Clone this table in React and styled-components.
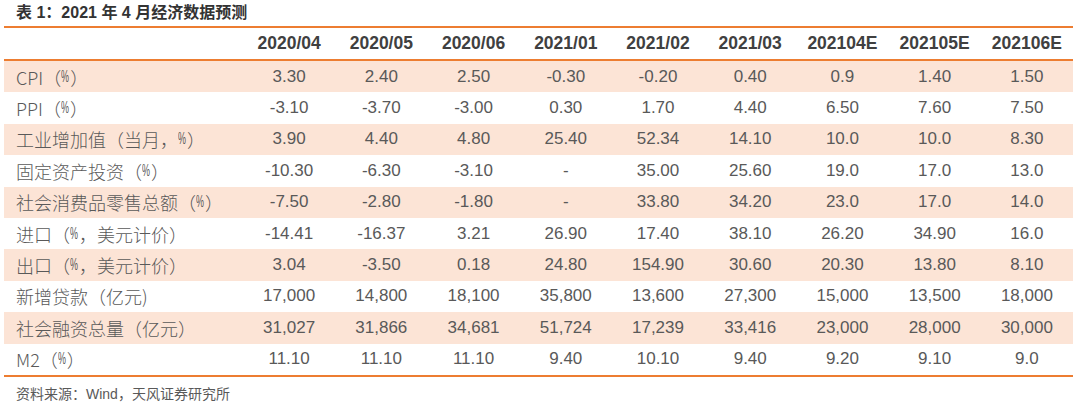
import React from "react";
import styled, { createGlobalStyle } from "styled-components";

const Global = createGlobalStyle`
  html, body { margin: 0; padding: 0; background: #ffffff; }
  body { font-family: "Liberation Sans", "Noto Sans CJK SC", sans-serif; }
`;

const Page = styled.div`
  width: 1080px;
  height: 408px;
  padding: 0 7px 0 4px;
  box-sizing: border-box;
  display: flex;
  flex-direction: column;
`;

const Title = styled.div`
  height: 26px;
  padding-left: 12px;
  font-size: 16px;
  font-weight: 700;
  line-height: 25px;
  color: #333333;
  font-family: "Liberation Sans", "Noto Sans CJK SC", sans-serif;
  white-space: pre;
`;

const Table = styled.div`
  display: grid;
  grid-template-columns: 239px repeat(9, 1fr);
  border-top: 2px solid #ed7d31;
  border-bottom: 2px solid #ed7d31;
`;

const HeadCell = styled.div`
  height: 31px;
  border-bottom: 2px solid #ed7d31;
  display: flex;
  align-items: center;
  justify-content: center;
  font-size: 17.5px;
  font-weight: 700;
  color: #404040;
`;

const Cell = styled.div`
  height: 31.4px;
  display: flex;
  align-items: center;
  justify-content: center;
  background: ${(p) => (p.$shade ? "#fce4d6" : "#ffffff")};
  font-size: 17px;
  color: #595959;
  white-space: nowrap;
`;

const LabelCell = styled(Cell)`
  justify-content: flex-start;
  padding-left: 12px;
  font-family: "Noto Sans CJK SC", sans-serif;
  font-size: 18px;
  font-weight: 300;
  text-spacing-trim: space-all;
`;

const Pct = styled.span`
  display: inline-block;
  width: 9px;
  font-family: "Liberation Sans", sans-serif;
  font-size: 16px;
  transform: scaleX(0.56);
  transform-origin: left center;
`;

const Source = styled.div`
  padding-left: 12px;
  margin-top: 8px;
  font-size: 14px;
  line-height: 18px;
  color: #595959;
`;

const headers = [
  "2020/04", "2020/05", "2020/06", "2021/01", "2021/02",
  "2021/03", "202104E", "202105E", "202106E",
];

const rows = [
  ["CPI（%）", "3.30", "2.40", "2.50", "-0.30", "-0.20", "0.40", "0.9", "1.40", "1.50"],
  ["PPI（%）", "-3.10", "-3.70", "-3.00", "0.30", "1.70", "4.40", "6.50", "7.60", "7.50"],
  ["工业增加值（当月，%）", "3.90", "4.40", "4.80", "25.40", "52.34", "14.10", "10.0", "10.0", "8.30"],
  ["固定资产投资（%）", "-10.30", "-6.30", "-3.10", "-", "35.00", "25.60", "19.0", "17.0", "13.0"],
  ["社会消费品零售总额（%）", "-7.50", "-2.80", "-1.80", "-", "33.80", "34.20", "23.0", "17.0", "14.0"],
  ["进口（%，美元计价）", "-14.41", "-16.37", "3.21", "26.90", "17.40", "38.10", "26.20", "34.90", "16.0"],
  ["出口（%，美元计价）", "3.04", "-3.50", "0.18", "24.80", "154.90", "30.60", "20.30", "13.80", "8.10"],
  ["新增贷款（亿元)", "17,000", "14,800", "18,100", "35,800", "13,600", "27,300", "15,000", "13,500", "18,000"],
  ["社会融资总量（亿元）", "31,027", "31,866", "34,681", "51,724", "17,239", "33,416", "23,000", "28,000", "30,000"],
  ["M2（%）", "11.10", "11.10", "11.10", "9.40", "10.10", "9.40", "9.20", "9.10", "9.0"],
];

function Label({ text }) {
  const parts = text.split("%");
  return parts.map((p, k) => (
    <React.Fragment key={k}>
      {p}
      {k < parts.length - 1 && <Pct>%</Pct>}
    </React.Fragment>
  ));
}

export default function App() {
  return (
    <>
      <Global />
      <Page>
        <Title>表 1：2021 年 4 月经济数据预测</Title>
        <Table>
          <HeadCell />
          {headers.map((h) => (
            <HeadCell key={h}>{h}</HeadCell>
          ))}
          {rows.map((r, i) =>
            r.map((v, j) =>
              j === 0 ? (
                <LabelCell key={`${i}-${j}`} $shade={i % 2 === 0}>
                  <Label text={v} />
                </LabelCell>
              ) : (
                <Cell key={`${i}-${j}`} $shade={i % 2 === 0}>
                  {v}
                </Cell>
              )
            )
          )}
        </Table>
        <Source>资料来源：Wind，天风证券研究所</Source>
      </Page>
    </>
  );
}
